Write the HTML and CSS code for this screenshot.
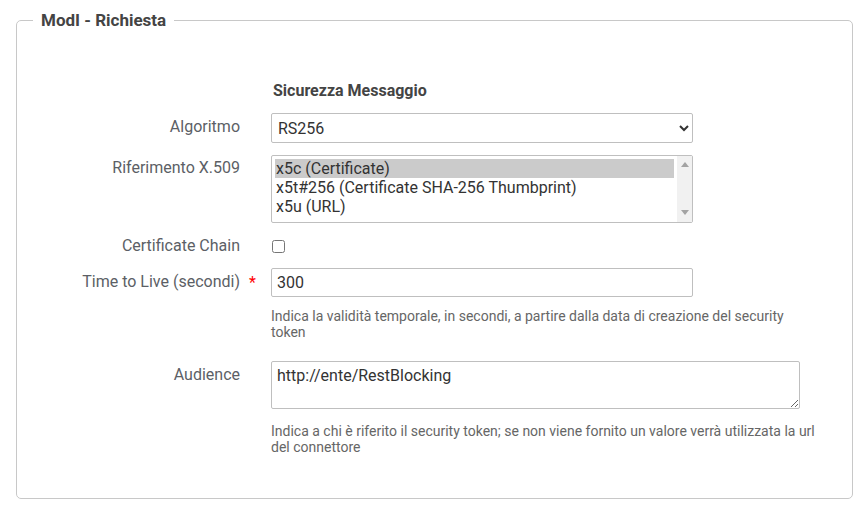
FILE: index.html
```html
<!DOCTYPE html>
<html lang="it">
<head>
<meta charset="utf-8">
<title>ModI - Richiesta</title>
<link rel="stylesheet" href="styles.css">
</head>
<body>
<fieldset class="panel">
  <legend class="panel-title">ModI - Richiesta</legend>
  <div class="section-title-row">
    <div class="label-col"></div>
    <div class="section-title">Sicurezza Messaggio</div>
  </div>

  <div class="row row-select">
    <label class="label-col" for="alg">Algoritmo</label>
    <div class="field">
      <select id="alg" class="control select">
        <option>RS256</option>
      </select>
    </div>
  </div>

  <div class="row row-multi">
    <label class="label-col" for="x509">Riferimento X.509</label>
    <div class="field multi-wrap">
      <select id="x509" class="control multi" multiple size="3">
        <option class="sel">x5c (Certificate)</option>
        <option>x5t#256 (Certificate SHA-256 Thumbprint)</option>
        <option>x5u (URL)</option>
      </select>
      <div class="fake-scroll" aria-hidden="true">
        <svg class="arrow" width="8" height="5" viewBox="0 0 8 5"><path d="M0 5 L4 0 L8 5 Z" fill="#a3a3a3"/></svg>
        <svg class="arrow" width="8" height="5" viewBox="0 0 8 5"><path d="M0 0 L8 0 L4 5 Z" fill="#a3a3a3"/></svg>
      </div>
    </div>
  </div>

  <div class="row row-check">
    <label class="label-col" for="chain">Certificate Chain</label>
    <div class="field">
      <input type="checkbox" id="chain" class="check">
    </div>
  </div>

  <div class="row row-text">
    <label class="label-col" for="ttl">Time to Live (secondi)<span class="req">*</span></label>
    <div class="field">
      <input type="text" id="ttl" class="control text" value="300">
      <p class="note">Indica la validità temporale, in secondi, a partire dalla data di creazione del security token</p>
    </div>
  </div>

  <div class="row row-area">
    <label class="label-col" for="aud">Audience</label>
    <div class="field">
      <textarea id="aud" class="control area">http://ente/RestBlocking</textarea>
      <p class="note note-wide">Indica a chi è riferito il security token; se non viene fornito un valore verrà utilizzata la url del connettore</p>
    </div>
  </div>
</fieldset>
</body>
</html>
```

FILE: styles.css
```css
* { box-sizing: border-box; }
html, body { margin: 0; padding: 0; background: #fff; }
body {
  font-family: Roboto, "Liberation Sans", sans-serif;
  color: #5c5f66;
  padding: 11px 13px 0 16px;
}
.panel {
  margin: 0;
  border: 1px solid #c8c8c8;
  border-radius: 5px;
  padding: 0;
  min-width: 0;
  height: 488px;
}
.panel-title {
  margin-left: 16px;
  padding: 0 8px;
  font-weight: 700;
  font-size: 17px;
  color: #444;
  line-height: 18px;
}
.section-title-row {
  display: flex;
  margin-top: 53px;
}
.label-col {
  width: 223px;
  flex: none;
  text-align: right;
  font-size: 16px;
  line-height: 20px;
  color: #5c5f66;
  position: relative;
  margin-right: 31px;
}
.section-title {
  font-weight: 700;
  font-size: 16px;
  color: #444;
  line-height: 18px;
  padding-left: 2px;
}
.row { display: flex; align-items: flex-start; }
.field { flex: none; }
.row-select { margin-top: 13px; }
.row-select .label-col { padding-top: 4px; }
.control {
  font-family: Roboto, "Liberation Sans", sans-serif;
  font-size: 16px;
  color: #333;
  border: 1px solid #bfbfbf;
  border-radius: 2px;
  background: #fff;
  margin: 0;
}
.select {
  width: 422px;
  height: 30px;
  padding: 0 2px;
}
.row-multi { margin-top: 12px; }
.row-multi .label-col { padding-top: 3px; }
.multi-wrap { position: relative; }
.multi {
  width: 422px;
  height: 68px;
  padding: 3px 18px 3px 3px;
  overflow: hidden;
  display: block;
}
.multi option { padding: 0 1px; line-height: 19px; }
.multi option.sel { background: #cbcbcb; color: #333; }
.fake-scroll {
  position: absolute;
  top: 1px;
  bottom: 1px;
  right: 1px;
  width: 15px;
  background: #f1f1f1;
  display: flex;
  flex-direction: column;
  justify-content: space-between;
  align-items: center;
  padding: 6px 0 7px;
}
.arrow { display: block; }
.row-check { margin-top: 12px; }
.row-check .label-col { padding-top: 1px; }
.check {
  margin: 5px 0 0 1px;
  width: 13px;
  height: 13px;
}
.row-text { margin-top: 11px; }
.row-text .label-col { padding-top: 4px; }
.req {
  position: absolute;
  right: -16px;
  top: 5px;
  color: #f00;
  font-size: 16px;
}
.text {
  width: 422px;
  height: 29px;
  padding: 0 5px;
  display: block;
}
.note {
  margin: 11px 0 0 0;
  font-size: 14px;
  line-height: 16px;
  color: #666;
  width: 548px;
}
.row-area { margin-top: 21px; }
.row-area .label-col { padding-top: 4px; }
.area {
  width: 529px;
  height: 48px;
  padding: 4px 5px;
  display: block;
  resize: vertical;
  line-height: 19px;
}
.note-wide { margin-top: 14px; }
```
